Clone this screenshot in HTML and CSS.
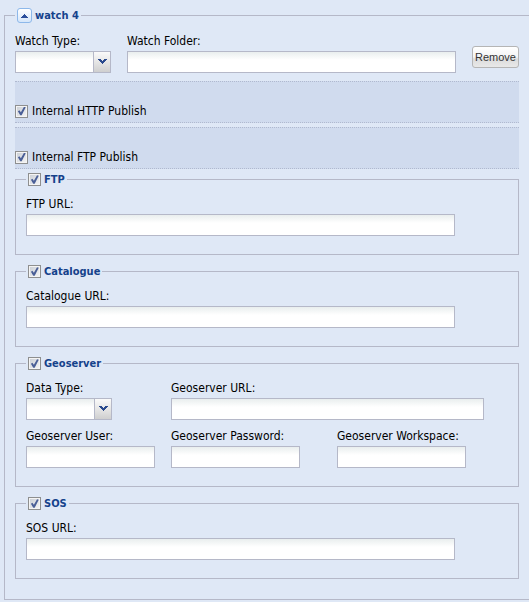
FILE: index.html
```html
<!DOCTYPE html>
<html lang="en">
<head>
<meta charset="utf-8">
<title>Watch settings</title>
<link rel="stylesheet" href="styles.css">
</head>
<body>
<form>
  <fieldset class="watch">
    <legend><button class="toggle" type="button" aria-label="Collapse"><svg width="7" height="4" viewBox="0 0 7 4" shape-rendering="crispEdges"><path d="M3 0h1v1h1v1h1v1h1v1H0V3h1V2h1V1h1z" fill="#2c4f9c"/></svg></button>watch 4</legend>

    <div class="row">
      <div class="field">
        <label for="watch-type">Watch Type:</label>
        <div class="combo combo-wide">
          <select id="watch-type"><option></option></select>
          <span class="trigger"><svg width="9" height="6" viewBox="0 0 9 6" shape-rendering="crispEdges"><path d="M0 0h3v1h1v1h1V1h1V0h3v1H8v1H7v1H6v1H5v1H4V4H3V3H2V2H1V1H0z" fill="#2a4a8e"/></svg></span>
        </div>
      </div>
      <div class="field grow">
        <label for="watch-folder">Watch Folder:</label>
        <input class="text" id="watch-folder" type="text">
      </div>
      <button class="remove" type="button">Remove</button>
    </div>

    <div class="panel">
      <input class="check" id="http" type="checkbox" checked>
      <label for="http">Internal HTTP Publish</label>
    </div>
    <div class="panel">
      <input class="check" id="internal-ftp" type="checkbox" checked>
      <label for="internal-ftp">Internal FTP Publish</label>
    </div>

    <fieldset class="group">
      <legend><input class="check" id="ftp" type="checkbox" checked><label for="ftp">FTP</label></legend>
      <label for="ftp-url">FTP URL:</label>
      <input class="text long" id="ftp-url" type="text">
    </fieldset>

    <fieldset class="group">
      <legend><input class="check" id="catalogue" type="checkbox" checked><label for="catalogue">Catalogue</label></legend>
      <label for="catalogue-url">Catalogue URL:</label>
      <input class="text long" id="catalogue-url" type="text">
    </fieldset>

    <fieldset class="group">
      <legend><input class="check" id="geoserver" type="checkbox" checked><label for="geoserver">Geoserver</label></legend>
      <div class="grid">
        <div class="field">
          <label for="data-type">Data Type:</label>
          <div class="combo">
            <select id="data-type"><option></option></select>
            <span class="trigger"><svg width="9" height="6" viewBox="0 0 9 6" shape-rendering="crispEdges"><path d="M0 0h3v1h1v1h1V1h1V0h3v1H8v1H7v1H6v1H5v1H4V4H3V3H2V2H1V1H0z" fill="#2a4a8e"/></svg></span>
          </div>
        </div>
        <div class="field span">
          <label for="geo-url">Geoserver URL:</label>
          <input class="text url" id="geo-url" type="text">
        </div>
        <div class="field">
          <label for="geo-user">Geoserver User:</label>
          <input class="text short" id="geo-user" type="text">
        </div>
        <div class="field">
          <label for="geo-pass">Geoserver Password:</label>
          <input class="text short" id="geo-pass" type="password">
        </div>
        <div class="field">
          <label for="geo-space">Geoserver Workspace:</label>
          <input class="text short" id="geo-space" type="text">
        </div>
      </div>
    </fieldset>

    <fieldset class="group">
      <legend><input class="check" id="sos" type="checkbox" checked><label for="sos">SOS</label></legend>
      <label for="sos-url">SOS URL:</label>
      <input class="text long" id="sos-url" type="text">
    </fieldset>
  </fieldset>
</form>
</body>
</html>
```
FILE: styles.css
```css
* {
  box-sizing: border-box;
}

body {
  margin: 0;
  background: #dfe8f6;
  color: #000;
  font: 12px/18px "DejaVu Sans Condensed", Tahoma, sans-serif;
}

form {
  padding: 8px 0 0 4px;
}

fieldset {
  min-width: 0;
  margin: 0;
  border: 1px solid #b5b8c8;
}

legend {
  display: flex;
  align-items: center;
  gap: 3px;
  height: 15px;
  padding: 0 2px;
  color: #15428b;
  font-size: 11px;
  font-weight: bold;
  line-height: 15px;
}

.watch {
  border-right: 0;
  padding: 10px 10px 20px;
}

.group {
  margin-top: 9px;
  padding: 9px 10px 18px;
}

.panel + .group {
  margin-top: 3px;
}

.group > label,
.field > label {
  display: block;
  padding-bottom: 2px;
  line-height: 16px;
}

.grid {
  display: grid;
  grid-template-columns: 145fr 166fr 171fr;
  row-gap: 8px;
}

.span {
  grid-column: span 2;
}

.toggle {
  display: flex;
  align-items: center;
  justify-content: center;
  width: 15px;
  height: 15px;
  padding: 0;
  border: 1px solid #8db8ea;
  border-radius: 3px;
  background: linear-gradient(#fff, #d5e6fa);
}

.row {
  display: flex;
  gap: 16px;
  margin-bottom: 8px;
}

.grow {
  flex: 1;
  min-width: 0;
}

.text,
.combo select {
  display: block;
  width: 100%;
  height: 22px;
  margin: 0;
  padding: 1px 3px;
  border: 1px solid #b5b8c8;
  border-radius: 0;
  background: linear-gradient(#e9eeee, #fff 8px);
  font: inherit;
  appearance: none;
}

.text.long {
  width: 89%;
}

.text.url {
  width: 93%;
}

.text.short {
  width: 129px;
}

.combo {
  position: relative;
  width: 86px;
}

.combo-wide {
  width: 96px;
}

.trigger {
  position: absolute;
  top: 0;
  right: 0;
  bottom: 0;
  display: flex;
  align-items: center;
  justify-content: center;
  width: 18px;
  border: 1px solid #b5b8c8;
  background: linear-gradient(#fafafa, #e6e6e6 50%, #cfcfcf);
  pointer-events: none;
}

.remove {
  align-self: flex-start;
  width: 47px;
  height: 22px;
  margin-top: 13px;
  padding: 0;
  border: 1px solid #b5b5b5;
  border-radius: 3px;
  background: linear-gradient(#fff, #f4f4f4 50%, #dcdcdc 60%, #e8e8e8);
  color: #333;
  font: 11px/18px "Liberation Sans", Arial, sans-serif;
}

.panel {
  display: flex;
  align-items: center;
  gap: 4px;
  padding: 20px 0 2px;
  border: dotted #b0b9cf;
  border-width: 1px 0;
  background: #d0dbee;
}

.panel + .panel {
  margin-top: 4px;
}

.check {
  position: relative;
  width: 13px;
  height: 13px;
  margin: 0;
  border: 1px solid #8e8f8f;
  background: linear-gradient(135deg, #c8cdd4, #f6f6f6);
  box-shadow: inset 0 0 0 1px #f4f4f4;
  appearance: none;
}

.check:checked::after {
  content: "";
  position: absolute;
  inset: 1px;
  background: #4a5f97;
  clip-path: polygon(10% 52%, 27% 42%, 43% 64%, 78% 4%, 97% 8%, 52% 98%, 36% 98%);
}
```
